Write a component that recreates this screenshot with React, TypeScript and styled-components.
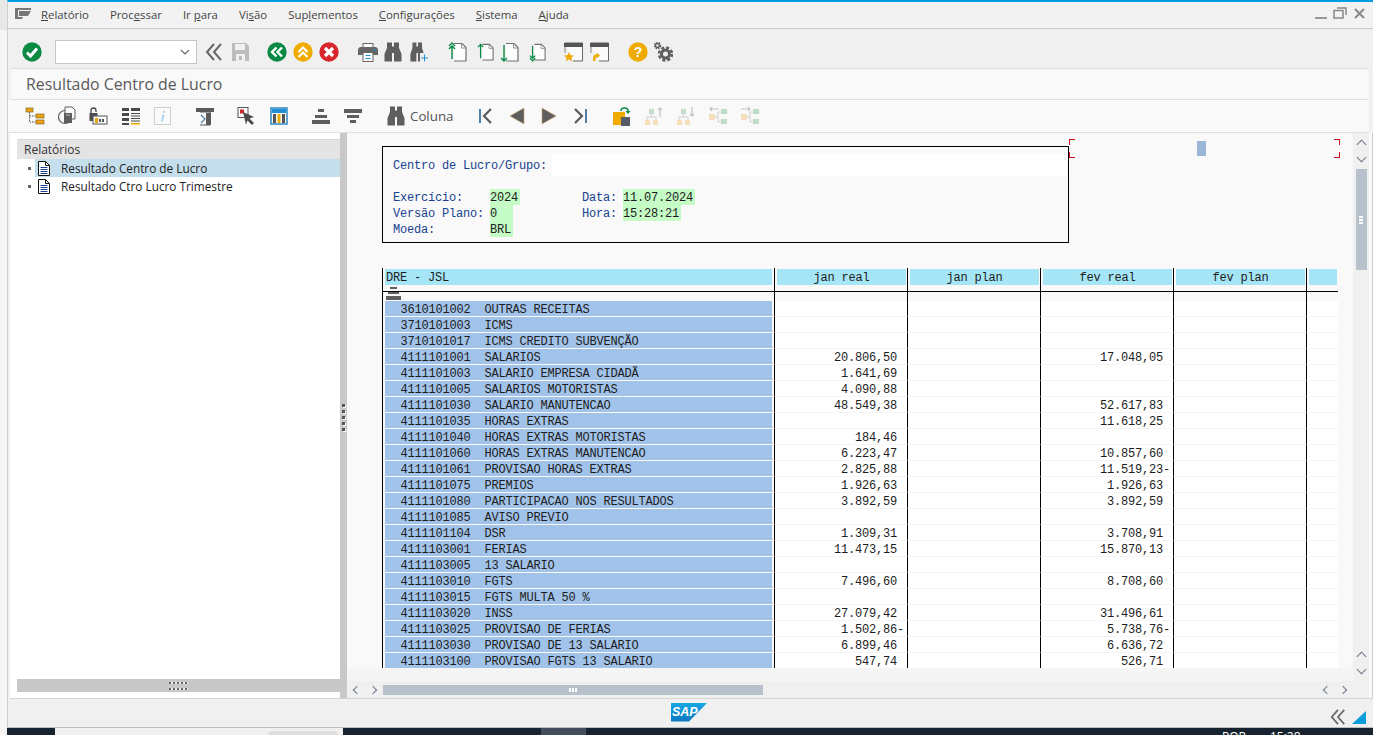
import React from "react";
import styled, { createGlobalStyle } from "styled-components";

const UI_FONT = '"Open Sans", "Noto Sans", sans-serif';
const MONO_FONT = '"Liberation Mono", "Courier New", monospace';
const MARK_RED = "linear-gradient(#d0101c, #d0101c)";

type ReportRow = { code: string; name: string; jan?: string; fev?: string };

const ROWS: ReportRow[] = [
  { code: "3610101002", name: "OUTRAS RECEITAS" },
  { code: "3710101003", name: "ICMS" },
  { code: "3710101017", name: "ICMS CREDITO SUBVENÇÃO" },
  { code: "4111101001", name: "SALARIOS", jan: "20.806,50", fev: "17.048,05" },
  { code: "4111101003", name: "SALARIO EMPRESA CIDADÃ", jan: "1.641,69" },
  { code: "4111101005", name: "SALARIOS MOTORISTAS", jan: "4.090,88" },
  { code: "4111101030", name: "SALARIO MANUTENCAO", jan: "48.549,38", fev: "52.617,83" },
  { code: "4111101035", name: "HORAS EXTRAS", fev: "11.618,25" },
  { code: "4111101040", name: "HORAS EXTRAS MOTORISTAS", jan: "184,46" },
  { code: "4111101060", name: "HORAS EXTRAS MANUTENCAO", jan: "6.223,47", fev: "10.857,60" },
  { code: "4111101061", name: "PROVISAO HORAS EXTRAS", jan: "2.825,88", fev: "11.519,23-" },
  { code: "4111101075", name: "PREMIOS", jan: "1.926,63", fev: "1.926,63" },
  { code: "4111101080", name: "PARTICIPACAO NOS RESULTADOS", jan: "3.892,59", fev: "3.892,59" },
  { code: "4111101085", name: "AVISO PREVIO" },
  { code: "4111101104", name: "DSR", jan: "1.309,31", fev: "3.708,91" },
  { code: "4111103001", name: "FERIAS", jan: "11.473,15", fev: "15.870,13" },
  { code: "4111103005", name: "13 SALARIO" },
  { code: "4111103010", name: "FGTS", jan: "7.496,60", fev: "8.708,60" },
  { code: "4111103015", name: "FGTS MULTA 50 %" },
  { code: "4111103020", name: "INSS", jan: "27.079,42", fev: "31.496,61" },
  { code: "4111103025", name: "PROVISAO DE FERIAS", jan: "1.502,86-", fev: "5.738,76-" },
  { code: "4111103030", name: "PROVISAO DE 13 SALARIO", jan: "6.899,46", fev: "6.636,72" },
  { code: "4111103100", name: "PROVISAO FGTS 13 SALARIO", jan: "547,74", fev: "526,71" },
];

const COLUMNS = ["jan real", "jan plan", "fev real", "fev plan", ""];

// amounts keep one blank place on the right for the trailing minus
const amount = (v?: string) => (v ? (v.endsWith("-") ? v : v + " ") : "");

/* ---------- icons ---------- */

const Svg = ({ w = 20, h = 20, children }: { w?: number; h?: number; children: React.ReactNode }) => (
  <svg width={w} height={h} viewBox={`0 0 ${w} ${h}`} fill="none">
    {children}
  </svg>
);

const Round = ({ color, children }: { color: string; children: React.ReactNode }) => (
  <Svg>
    <circle cx="10" cy="10" r="9.7" fill={color} />
    {children}
  </Svg>
);

const Chevrons = ({ color = "#666", size = 18 }: { color?: string; size?: number }) => (
  <svg width={size} height={size} viewBox="0 0 18 18" fill="none" stroke={color} strokeWidth="2">
    <path d="M9 1 2 9l7 8M16 1 9 9l7 8" />
  </svg>
);

const Binoculars = ({ plus }: { plus?: boolean }) => (
  <Svg w={18} h={20}>
    <path
      d="M3 0.500h5v4h2v-4h5V6l2.500 6v7.500h-7.500V11H8v8.500H0.500V12L3 6z"
      fill="#5e5e5e"
      transform={plus ? "scale(.8 1)" : undefined}
    />
    {plus && (
      <>
        <rect x="10" y="11" width="8" height="9" fill="#f0f0f0" />
        <path d="M14.500 12.500v7M11 16h7" stroke="#1f8fd6" strokeWidth="1" />
      </>
    )}
  </Svg>
);

const PageArrow = ({ dir, double }: { dir: "up" | "down"; double?: boolean }) => (
  <Svg w={19} h={20}>
    <path d="M6 1.500h8l4 4v13.500H6" fill="#fdfdfd" stroke="#707070" strokeWidth="1.200" />
    <path d="M13.500 1.500v4.500H18" stroke="#909090" />
    {dir === "up" ? (
      <path
        d={double ? "M4 17V4M1 7l3-3 3 3M1 4l3-3 3 3" : "M4 17V1.500M1 4.500l3-3 3 3"}
        stroke="#0a8a44"
        strokeWidth="1.400"
      />
    ) : (
      <path
        d={double ? "M4 3v14M1 14l3 3 3-3M1 17l3 3 3-3" : "M4 3v16M1 16l3 3 3-3"}
        stroke="#0a8a44"
        strokeWidth="1.400"
      />
    )}
  </Svg>
);

const WindowIcon = ({ kind }: { kind: "star" | "arrow" }) => (
  <Svg w={19} h={20}>
    <path d="M0.500 1h18v18H9" fill="#fafafa" stroke="#666" strokeWidth="1" />
    <rect x="0" y="1" width="19" height="4" fill="#555" />
    <path d="M1 5v6" stroke="#888" />
    {kind === "star" ? (
      <path d="M5 10l1.500 3.300 3.500.3-2.700 2.300.9 3.600L5 17.300 1.800 19.500l.9-3.600L0 13.600l3.500-.3z" fill="#f0ab00" />
    ) : (
      <path d="M3 19v-3.500c0-2 1.500-3 3.500-3V10.500l3.500 3-3.500 3V15c-.9 0-1 .5-1 1.500V19z" fill="#f0ab00" />
    )}
  </Svg>
);

const Gear = () => (
  <Svg w={19} h={20}>
    <circle cx="3.500" cy="3.500" r="2" stroke="#5e5e5e" strokeWidth="1.500" />
    <circle cx="3.500" cy="3.500" r="3.200" stroke="#5e5e5e" strokeWidth="1.200" strokeDasharray="1.500 1.200" />
    <circle cx="11.500" cy="12" r="4" stroke="#5e5e5e" strokeWidth="3" />
    <circle cx="11.500" cy="12" r="6.500" stroke="#5e5e5e" strokeWidth="2.500" strokeDasharray="3 2.100" />
  </Svg>
);

const TreeIcon = () => (
  <Svg>
    <rect x="1" y="2" width="7" height="4" fill="#e8a317" stroke="#7a5a14" strokeWidth=".6" />
    <rect x="11" y="8" width="8" height="4" fill="#e8a317" stroke="#7a5a14" strokeWidth=".6" />
    <rect x="11" y="14" width="8" height="4" fill="#e8a317" stroke="#7a5a14" strokeWidth=".6" />
    <path d="M4.500 6v10h6M4.500 10h6" stroke="#555" strokeDasharray="1.500 1" />
  </Svg>
);

const DocCircleIcon = () => (
  <Svg>
    <circle cx="8" cy="11" r="6.500" stroke="#5e5e5e" strokeWidth="1.200" fill="#fafafa" />
    <path d="M8 1h7l3 3v9H8z" fill="#fafafa" stroke="#5e5e5e" />
    <rect x="7" y="7" width="8" height="10" fill="#5e5e5e" />
    <path d="M9 9h4" stroke="#bbb" />
  </Svg>
);

const LockIcon = () => (
  <Svg>
    <path d="M3 7V4.500a2.500 2.500 0 0 1 5 0V6" stroke="#444" strokeWidth="1.300" />
    <rect x="1.500" y="7" width="8" height="8" fill="#4e4e4e" />
    <rect x="5" y="10" width="14" height="8" fill="#fafafa" stroke="#555" />
    <rect x="7" y="12" width="3" height="5" fill="#e8a317" />
    <rect x="11" y="13" width="2" height="3" fill="#555" />
    <rect x="14" y="13" width="2" height="3" fill="#555" />
  </Svg>
);

const ListIcon = () => (
  <Svg>
    <path d="M1 2h7v3H1zM1 7h7v3H1zM1 12h7v3H1zM1 17h7v2H1z" fill="#4a4a4a" />
    <path d="M10 2h9v3h-9zM10 7h9v1h-9zM10 9.500h9v1h-9zM10 12h9v1h-9zM10 14.500h9v1h-9z" fill="#4a4a4a" />
    <path d="M10 17h9v1.500h-9z" fill="#f0ab00" />
  </Svg>
);

const InfoIcon = () => (
  <Svg>
    <rect x="1.500" y="1.500" width="16" height="17" fill="#fafafa" stroke="#cfcfcf" />
    <path d="M10 5h2v1.800h-2zM9.500 8.500h2L10 15.500H8z" fill="#a9d5ee" />
  </Svg>
);

const FunnelPageIcon = () => (
  <Svg>
    <rect x="1" y="2" width="18" height="4" fill="#5a5a5a" />
    <path d="M5 6h10v13H5" fill="#fafafa" stroke="#555" />
    <rect x="11" y="7" width="5" height="12" fill="#5a5a5a" />
    <path d="M6 9l4 4-4 4" stroke="#4e7fa8" strokeWidth="1.200" />
  </Svg>
);

const CursorIcon = () => (
  <Svg>
    <rect x="2" y="1.500" width="10" height="10" fill="#fafafa" stroke="#555" />
    <rect x="4" y="3.500" width="4" height="4" fill="#c8262c" />
    <path d="M7 6l11 5-4.500 1.500L18 17l-2 2-4.500-4.500L10 18.500z" fill="#4a4a4a" />
  </Svg>
);

const GridIcon = () => (
  <Svg>
    <rect x="2" y="2" width="16" height="16" fill="#fafafa" stroke="#1f7fbd" strokeWidth="1.400" />
    <rect x="3" y="3" width="14" height="4" fill="#1f8fd6" />
    <path d="M4 8h3v9H4z" fill="#555" />
    <path d="M8.500 8h3v9h-3z" fill="#f0ab00" />
    <path d="M13 8h3v9h-3z" fill="#555" />
  </Svg>
);

const SortIcon = ({ up }: { up?: boolean }) => (
  <Svg>
    <path d={up ? "M7 3h6v3H7zM4 9h12v3H4zM1 14h18v4H1z" : "M1 3h18v4H1zM4 9h12v3H4zM7 14h6v3H7z"} fill="#5e5e5e" />
  </Svg>
);

const NavIcon = ({ kind }: { kind: "first" | "prev" | "next" | "last" }) => {
  const shapes = {
    first: (
      <>
        <path d="M5 3v14" stroke="#4f7ea8" strokeWidth="2" />
        <path d="M16 3l-7 7 7 7" stroke="#5a5a5a" strokeWidth="2.200" />
      </>
    ),
    prev: <path d="M17 2v16L3 10z" fill="#5e5e5e" stroke="#c9a26f" strokeWidth=".6" />,
    next: <path d="M3 2v16l14-8z" fill="#5e5e5e" stroke="#c9a26f" strokeWidth=".6" />,
    last: (
      <>
        <path d="M15 3v14" stroke="#4f7ea8" strokeWidth="2" />
        <path d="M4 3l7 7-7 7" stroke="#5a5a5a" strokeWidth="2.200" />
      </>
    ),
  };
  return <Svg>{shapes[kind]}</Svg>;
};

const BagIcon = () => (
  <Svg>
    <rect x="1" y="6" width="12" height="13" fill="#f0ab00" />
    <rect x="9" y="11" width="9" height="9" fill="#555c66" />
    <path d="M9 5c0-2 1.500-3 3.500-3 2.500 0 3.500 1 3.500 3" stroke="#0a8a44" strokeWidth="1.500" />
    <path d="M13.500 5l2.500 3 2.500-3z" fill="#0a8a44" />
  </Svg>
);

const HierarchyIcon = ({ kind }: { kind: "up" | "down" | "left" | "right" }) => {
  const vertical = kind === "up" || kind === "down";
  return (
    <Svg>
      {vertical ? (
        <>
          <rect x="5" y="3" width="5" height="5" fill="#c5dccb" />
          <path d="M7.500 8v3M3 14v-3h9v3" stroke="#cfcfcf" />
          <rect x="1" y="14" width="5" height="5" fill="#f3dfb8" />
          <rect x="9" y="14" width="5" height="5" fill="#f3dfb8" />
          <path
            d={kind === "up" ? "M16 11V2M14 4l2-2 2 2" : "M16 1v9M14 8l2 2 2-2"}
            stroke="#c4c4c4"
            strokeWidth="1.300"
          />
        </>
      ) : (
        <>
          <rect x="1" y="8" width="6" height="6" fill="#f3dfb8" />
          <rect x="13" y="3" width="6" height="5" fill="#bfdccb" />
          <rect x="13" y="13" width="6" height="5" fill="#bfdccb" />
          <path d="M7 11h3M10 6v10M10 6h3M10 16h3" stroke="#cfcfcf" />
          <path d={kind === "left" ? "M11 3H2M4 1L2 3l2 2" : "M1 3h9M8 1l2 2-2 2"} stroke="#c4c4c4" strokeWidth="1.200" />
        </>
      )}
    </Svg>
  );
};

const DocIcon = () => (
  <svg width="12" height="15" viewBox="0 0 12 15" fill="none">
    <path d="M0.500 0.500h7l4 4v10h-11z" fill="#fff" stroke="#111" />
    <path d="M7.500 0.500v4h4" stroke="#111" />
    <path d="M2.500 6.500h7M2.500 8.500h7M2.500 10.500h7M2.500 12.500h7" stroke="#1b3f8f" />
  </svg>
);

const SapLogo = () => (
  <svg width="36" height="19" viewBox="0 0 36 19">
    <defs>
      <linearGradient id="sapBlue" x1="0" y1="0" x2="0" y2="1">
        <stop offset="0" stopColor="#18a8e4" />
        <stop offset="1" stopColor="#0a78c2" />
      </linearGradient>
    </defs>
    <path d="M0 0h36L18 18.500H0z" fill="url(#sapBlue)" />
    <text x="1" y="13" fill="#fff" fontFamily="Liberation Sans, sans-serif" fontSize="12.500" fontWeight="700" fontStyle="italic">
      SAP
    </text>
  </svg>
);

/* ---------- page ---------- */

const App = () => {
  return (
    <Page>
      <GlobalStyle />
      <Screen>
        <Backdrop />
        <SapWindow>
          <MenuBar>
            <MenuGlyph>
              <svg width="16" height="11" viewBox="0 0 16 11">
                <path d="M0 0h16v2H3v7h5l-1 2H0z" fill="#777" />
                <path d="M4 3h12l-3 5H4z" fill="#777" />
              </svg>
            </MenuGlyph>
            <MenuList>
              <MenuItem><u>R</u>elatório</MenuItem>
              <MenuItem>Proc<u>e</u>ssar</MenuItem>
              <MenuItem>Ir <u>p</u>ara</MenuItem>
              <MenuItem>Vi<u>s</u>ão</MenuItem>
              <MenuItem>Sup<u>l</u>ementos</MenuItem>
              <MenuItem><u>C</u>onfigurações</MenuItem>
              <MenuItem><u>S</u>istema</MenuItem>
              <MenuItem><u>A</u>juda</MenuItem>
            </MenuList>
            <WindowControls>
              <svg width="12" height="12" viewBox="0 0 12 12"><rect y="10" width="12" height="2" fill="#999" /></svg>
              <svg width="14" height="12" viewBox="0 0 14 12" fill="none" stroke="#888" strokeWidth="1.500">
                <rect x="1" y="3.500" width="9" height="7.500" />
                <path d="M4 1h9v7" />
              </svg>
              <svg width="11" height="11" viewBox="0 0 11 11" stroke="#888" strokeWidth="2"><path d="M1 1l9 9M10 1l-9 9" /></svg>
            </WindowControls>
          </MenuBar>

          <MainToolbar>
            <Slot $ml={14} $w={20}>
              <Round color="#0b8a44"><path d="M5 10.500l3.500 3.500L15 6.500" stroke="#fff" strokeWidth="3" /></Round>
            </Slot>
            <CommandBox $ml={13}>
              <svg width="10" height="6" viewBox="0 0 10 6" fill="none" stroke="#666" strokeWidth="1.200"><path d="M1 1l4 4 4-4" /></svg>
            </CommandBox>
            <Slot $ml={8} $w={18}><Chevrons /></Slot>
            <Slot $ml={8} $w={19}>
              <Svg w={19} h={20}>
                <path d="M1 1h14l3 3v15H1z" fill="#bcbcbc" />
                <rect x="4" y="2" width="10" height="6" fill="#f0f0f0" />
                <rect x="5" y="12" width="9" height="7" fill="#f0f0f0" />
                <rect x="8" y="14" width="3" height="4" fill="#bcbcbc" />
              </Svg>
            </Slot>
            <Slot $ml={17} $w={20}>
              <Round color="#0b8a44"><path d="M9.500 5.500 5 10l4.500 4.500M15 5.500 10.500 10l4.500 4.500" stroke="#fff" strokeWidth="2.400" /></Round>
            </Slot>
            <Slot $ml={6} $w={20}>
              <Round color="#f0ab00"><path d="M5.500 10 10 5.500l4.500 4.500M5.500 15 10 10.500l4.500 4.500" stroke="#fff" strokeWidth="2.200" /></Round>
            </Slot>
            <Slot $ml={6} $w={20}>
              <Round color="#d9252c"><path d="M6 6l8 8M14 6l-8 8" stroke="#fff" strokeWidth="3.200" /></Round>
            </Slot>
            <Slot $ml={19} $w={20}>
              <Svg>
                <rect x="5" y="1.500" width="10" height="4" fill="#fafafa" stroke="#666" />
                <path d="M0 8c0-1.500 1-3 3-3h14c2 0 3 1.500 3 3v5H0z" fill="#666" />
                <rect x="5" y="10.500" width="10" height="9" fill="#fafafa" stroke="#666" />
                <path d="M7.500 13.500h5M7.500 16.500h5" stroke="#1f8fd6" />
                <rect x="15.500" y="7" width="2" height="1.500" fill="#1f8fd6" />
              </Svg>
            </Slot>
            <Slot $ml={6} $w={18}><Binoculars /></Slot>
            <Slot $ml={8} $w={18}><Binoculars plus /></Slot>
            <Slot $ml={20} $w={19}><PageArrow dir="up" double /></Slot>
            <Slot $ml={10} $w={17}><PageArrow dir="up" /></Slot>
            <Slot $ml={6} $w={19}><PageArrow dir="down" /></Slot>
            <Slot $ml={10} $w={17}><PageArrow dir="down" double /></Slot>
            <Slot $ml={18} $w={19}><WindowIcon kind="star" /></Slot>
            <Slot $ml={7} $w={19}><WindowIcon kind="arrow" /></Slot>
            <Slot $ml={19} $w={20}>
              <Round color="#f0ab00">
                <text x="10" y="15" textAnchor="middle" fill="#fff" fontFamily="Liberation Sans, sans-serif" fontSize="14" fontWeight="700">?</text>
              </Round>
            </Slot>
            <Slot $ml={6} $w={19}><Gear /></Slot>
          </MainToolbar>

          <TitleBar>Resultado Centro de Lucro</TitleBar>

          <AppToolbar>
            <Slot $ml={17} $w={20}><TreeIcon /></Slot>
            <Slot $ml={12} $w={20}><DocCircleIcon /></Slot>
            <Slot $ml={11} $w={20}><LockIcon /></Slot>
            <Slot $ml={13} $w={20}><ListIcon /></Slot>
            <Slot $ml={12} $w={20}><InfoIcon /></Slot>
            <Slot $ml={22} $w={20}><FunnelPageIcon /></Slot>
            <Slot $ml={21} $w={20}><CursorIcon /></Slot>
            <Slot $ml={13} $w={20}><GridIcon /></Slot>
            <Slot $ml={22} $w={20}><SortIcon up /></Slot>
            <Slot $ml={12} $w={20}><SortIcon /></Slot>
            <Slot $ml={24} $w={18}><Binoculars /></Slot>
            <ToolLabel>Coluna</ToolLabel>
            <Slot $ml={23} $w={20}><NavIcon kind="first" /></Slot>
            <Slot $ml={12} $w={20}><NavIcon kind="prev" /></Slot>
            <Slot $ml={12} $w={20}><NavIcon kind="next" /></Slot>
            <Slot $ml={12} $w={20}><NavIcon kind="last" /></Slot>
            <Slot $ml={21} $w={20}><BagIcon /></Slot>
            <Slot $ml={12} $w={20}><HierarchyIcon kind="up" /></Slot>
            <Slot $ml={12} $w={20}><HierarchyIcon kind="down" /></Slot>
            <Slot $ml={12} $w={20}><HierarchyIcon kind="left" /></Slot>
            <Slot $ml={12} $w={20}><HierarchyIcon kind="right" /></Slot>
          </AppToolbar>

          <Workspace>
            <Gutter />
            <TreePane>
              <TreeBox>
                <TreeHeader>Relatórios</TreeHeader>
                <TreeList>
                  <TreeRow>
                    <Bullet />
                    <TreeLabel $selected><DocIcon /><span>Resultado Centro de Lucro</span></TreeLabel>
                  </TreeRow>
                  <TreeRow>
                    <Bullet />
                    <TreeLabel><DocIcon /><span>Resultado Ctro Lucro Trimestre</span></TreeLabel>
                  </TreeRow>
                </TreeList>
                <HSash>
                  <HGrip />
                  <HGrip />
                </HSash>
              </TreeBox>
            </TreePane>
            <VSash>
              <VGrip /><VGrip /><VGrip /><VGrip /><VGrip />
            </VSash>
            <ReportPane>
              <ReportMain>
                <ReportView>
                  <Report>
                    <InfoBox>
                      <GroupLine>
                        <GroupLabel>Centro de Lucro/Grupo:</GroupLabel>
                        <GroupField />
                      </GroupLine>
                      <InfoGrid>
                        <BlueText>Exercício:</BlueText>
                        <Value $w={30}>2024</Value>
                        <BlueText>Data:</BlueText>
                        <Value $w={72}>11.07.2024</Value>
                        <BlueText>Versão Plano:</BlueText>
                        <Value $w={23}>0</Value>
                        <BlueText>Hora:</BlueText>
                        <Value $w={58}>15:28:21</Value>
                        <BlueText>Moeda:</BlueText>
                        <Value $w={23}>BRL</Value>
                      </InfoGrid>
                    </InfoBox>
                    <CornerMark $side="left" />
                    <PositionMark />
                    <CornerMark $side="right" />

                    <Table>
                      <HeaderRow>
                        <FirstCell><HeaderFill $first>DRE - JSL</HeaderFill></FirstCell>
                        {COLUMNS.map((c, i) => (
                          <ValueCell key={i}><HeaderFill>{c}</HeaderFill></ValueCell>
                        ))}
                      </HeaderRow>
                      <SumRow>
                        <FirstCell />
                        {COLUMNS.map((_, i) => <ValueCell key={i} />)}
                        <SumGlyph>
                          <svg width="15" height="14" viewBox="0 0 15 14">
                            <path d="M4 0h7v2H4zM2 5h11v2H2zM0 9h15v4H0z" fill="#5e5e5e" />
                          </svg>
                        </SumGlyph>
                      </SumRow>
                      {ROWS.map((r) => (
                        <DataRow key={r.code}>
                          <FirstCell><RowBar>{`${r.code}  ${r.name}`}</RowBar></FirstCell>
                          <ValueCell><Amount>{amount(r.jan)}</Amount></ValueCell>
                          <ValueCell />
                          <ValueCell><Amount>{amount(r.fev)}</Amount></ValueCell>
                          <ValueCell />
                          <ValueCell />
                        </DataRow>
                      ))}
                    </Table>
                  </Report>
                </ReportView>
                <VScroll>
                  <ScrollArrows>
                    <ArrowV $up /><ArrowV />
                  </ScrollArrows>
                  <VThumb><i /><i /><i /></VThumb>
                  <ScrollArrows $bottom>
                    <ArrowV $up /><ArrowV />
                  </ScrollArrows>
                </VScroll>
              </ReportMain>
              <HScroll>
                <ArrowH />
                <ArrowH $right />
                <HThumb><i /><i /><i /></HThumb>
                <HScrollEnd>
                  <ArrowH />
                  <ArrowH $right />
                </HScrollEnd>
              </HScroll>
            </ReportPane>
            <RightEdge />
          </Workspace>

          <StatusBar>
            <SapLogo />
            <StatusEnd>
              <Chevrons color="#6a6a6a" size={16} />
              <svg width="14" height="13" viewBox="0 0 14 13"><path d="M14 0v13H0z" fill="#0a9ddb" /></svg>
            </StatusEnd>
          </StatusBar>
        </SapWindow>
      </Screen>

      <Taskbar>
        <TaskDark $w={48} />
        <TaskSearch><TaskPill /></TaskSearch>
        <TaskDark $w={198} />
        <TaskActive />
        <TaskClock>
          <span>POR</span>
          <span>15:28</span>
        </TaskClock>
      </Taskbar>
    </Page>
  );
};

export default App;

const GlobalStyle = createGlobalStyle`
  html, body {
    margin: 0;
    padding: 0;
    height: 100%;
    overflow: hidden;
    background: #f4f4f4;
    font-family: ${UI_FONT};
  }
  #root { height: 100%; }
`;

const Page = styled.div`
  width: 1373px;
  height: 735px;
  display: flex;
  flex-direction: column;
  overflow: hidden;
`;

const Screen = styled.div`
  flex: 1;
  min-height: 0;
  display: flex;
`;

const Backdrop = styled.div`
  width: 7px;
  background: linear-gradient(#e8e8e8 0 30px, #f5f5f5 30px);
`;

const SapWindow = styled.div`
  flex: 1;
  min-width: 0;
  display: flex;
  flex-direction: column;
  border-left: 1px solid #cfcfcf;
  background: #f0f0f0;
  border-top: 2px solid #009de0;
`;

const MenuBar = styled.div`
  height: 26px;
  flex: none;
  display: flex;
  align-items: center;
  background: #f2f2f2;
  border-bottom: 1px solid #c9c9c9;
  box-sizing: content-box;
`;

const MenuGlyph = styled.span`
  margin-left: 7px;
  width: 26px;
  display: flex;
  margin-top: -4px;
`;

const MenuList = styled.div`
  display: flex;
  gap: 21px;
`;

const MenuItem = styled.span`
  font-size: 11.38px;
  color: #444;
  line-height: 16px;
`;

const WindowControls = styled.div`
  margin-left: auto;
  margin-right: 8px;
  display: flex;
  align-items: center;
  gap: 6px;
  margin-top: -4px;

  svg:nth-child(2) {
    margin-right: 1px;
  }
`;

const MainToolbar = styled.div`
  height: 39px;
  flex: none;
  display: flex;
  align-items: center;
  background: #f0f0f0;
  padding-top: 7px;
  box-sizing: border-box;
`;

const Slot = styled.span<{ $w: number; $ml: number }>`
  flex: none;
  width: ${(p) => p.$w}px;
  margin-left: ${(p) => p.$ml}px;
  height: 20px;
  display: flex;
  align-items: center;
  justify-content: center;
`;

const CommandBox = styled.div<{ $ml: number }>`
  width: 142px;
  height: 24px;
  box-sizing: border-box;
  margin-left: ${(p) => p.$ml}px;
  background: #fff;
  border: 1px solid #c4c4c4;
  display: flex;
  align-items: center;
  justify-content: flex-end;
  padding-right: 6px;
`;

const TitleBar = styled.div`
  height: 32px;
  flex: none;
  margin: 0 4px 0 3px;
  padding-left: 15px;
  box-sizing: border-box;
  display: flex;
  align-items: center;
  background: #f9f9f9;
  border-top: 1px solid #e0e0e0;
  border-bottom: 1px solid #e0e0e0;
  font-size: 15.85px;
  color: #5a5a5a;
`;

const AppToolbar = styled.div`
  height: 33px;
  flex: none;
  display: flex;
  align-items: center;
  margin-right: 4px;
  background: #f9f9f9;
  border-bottom: 1px solid #e0e0e0;
  box-sizing: border-box;
`;

const ToolLabel = styled.span`
  margin-left: 5px;
  width: 42px;
  font-size: 13.3px;
  color: #555;
  white-space: nowrap;
`;

const Workspace = styled.div`
  height: 565px;
  flex: none;
  display: flex;
`;

const Gutter = styled.div`
  width: 2px;
  background: #f0f0f0;
`;

const TreePane = styled.div`
  width: 330px;
  flex: none;
  background: #fff;
  padding: 6px 0 6px 7px;
  box-sizing: border-box;
  display: flex;
`;

const TreeBox = styled.div`
  flex: 1;
  display: flex;
  flex-direction: column;
  border-top: 1px solid #d8d8d8;
`;

const TreeHeader = styled.div`
  height: 19px;
  flex: none;
  background: #e4e4e4;
  padding-left: 7px;
  font-size: 12px;
  line-height: 19px;
  color: #333;
`;

const TreeList = styled.div`
  flex: 1;
  background: #fff;
`;

const TreeRow = styled.div`
  height: 18px;
  display: flex;
  align-items: center;
  padding-left: 11px;
`;

const Bullet = styled.span`
  width: 3px;
  height: 3px;
  background: #666;
  flex: none;
`;

const TreeLabel = styled.div<{ $selected?: boolean }>`
  flex: 1;
  height: 100%;
  margin-left: 4px;
  padding-left: 3px;
  display: flex;
  align-items: center;
  gap: 11px;
  font-size: 11.8px;
  color: #222;
  background: ${(p) => (p.$selected ? "#c5deec" : "transparent")};
`;

const HSash = styled.div`
  height: 13px;
  flex: none;
  background: #c8c8c8;
  display: flex;
  flex-direction: column;
  align-items: center;
  justify-content: center;
  gap: 4px;
`;

const HGrip = styled.i`
  width: 19px;
  height: 2px;
  background: repeating-linear-gradient(90deg, #666 0 2px, #eee 2px 4px);
`;

const VSash = styled.div`
  width: 7px;
  flex: none;
  background: #c8c8c8;
  display: flex;
  flex-direction: column;
  align-items: center;
  justify-content: center;
  gap: 3px;
  padding-top: 4px;
  box-sizing: border-box;
`;

const VGrip = styled.i`
  width: 3px;
  height: 3px;
  background: #555;
  box-shadow: 1px 1px 0 #fff;
`;

const ReportPane = styled.div`
  flex: 1;
  min-width: 0;
  display: flex;
  flex-direction: column;
`;

const ReportMain = styled.div`
  flex: 1;
  min-height: 0;
  display: flex;
`;

const ReportView = styled.div`
  flex: 1;
  min-width: 0;
  background: #f5f5f5;
  padding-bottom: 13px;
`;

const Report = styled.div`
  position: relative;
  height: 100%;
  overflow: hidden;
  background: #f9f9f9;
  padding: 13px 0 0 35px;
  box-sizing: border-box;
  font-family: ${MONO_FONT};
  font-size: 12px;
  letter-spacing: -0.2px;
  line-height: 16px;
  color: #1d1d1d;
`;

const InfoBox = styled.div`
  width: 687px;
  height: 97px;
  box-sizing: border-box;
  border: 1px solid #000;
  padding: 7px 0 0 10px;
`;

const GroupLine = styled.div`
  display: flex;
  height: 22px;
  align-items: flex-start;
`;

const GroupField = styled.div`
  flex: 1;
  height: 22px;
  margin-left: 5px;
  background: #fff;
  margin-right: 1px;
`;

const BlueText = styled.span`
  color: #17418f;
  white-space: pre;
  line-height: 18px;
`;

const GroupLabel = styled(BlueText)`
  line-height: 24px;
`;

const InfoGrid = styled.div`
  margin-top: 13px;
  display: grid;
  grid-template-columns: 97px 92px 41px auto;
  grid-auto-rows: 16px;
`;

const Value = styled.span<{ $w: number }>`
  width: ${(p) => p.$w}px;
  background: #c5fbc5;
  white-space: pre;
  color: #1d1d1d;
  line-height: 18px;
`;

const CornerMark = styled.span<{ $side: "left" | "right" }>`
  position: absolute;
  top: 6px;
  left: ${(p) => (p.$side === "left" ? 722 : 987)}px;
  width: 6px;
  height: 19px;
  background:
    ${MARK_RED} left top / 6px 1px no-repeat,
    ${MARK_RED} left bottom / 6px 1px no-repeat,
    ${MARK_RED} ${(p) => p.$side} top / 1px 6px no-repeat,
    ${MARK_RED} ${(p) => p.$side} bottom / 1px 6px no-repeat;
`;

const PositionMark = styled.span`
  position: absolute;
  top: 8px;
  left: 850px;
  width: 9px;
  height: 15px;
  background: #9ab6d6;
`;

const Table = styled.div`
  margin-top: 25px;
  width: 956px;
`;

const Columns = styled.div`
  display: grid;
  grid-template-columns: 392px 133px 133px 133px 133px 32px;
`;

const HeaderRow = styled(Columns)`
  height: 23px;
  border-bottom: 1px solid #000;
`;

const SumRow = styled(Columns)`
  height: 9px;
  position: relative;
`;

const SumGlyph = styled.span`
  position: absolute;
  left: 4px;
  top: -5px;
  display: flex;
`;

const DataRow = styled(Columns)`
  height: 16px;
`;

const FirstCell = styled.div`
  border-left: 1px solid #000;
  padding-left: 2px;
  overflow: hidden;
`;

const ValueCell = styled.div`
  border-left: 1px solid #000;
  position: relative;
  overflow: hidden;

  ${DataRow} & {
    background: #fff;
    border-bottom: 1px solid #f5f5f5;
  }
`;

const HeaderFill = styled.div<{ $first?: boolean }>`
  height: 16px;
  line-height: 18px;
  margin: 1px ${(p) => (p.$first ? "2px" : "1px")} 0 ${(p) => (p.$first ? "0" : "2px")};
  background: #a5e5f5;
  text-align: ${(p) => (p.$first ? "left" : "center")};
  padding-left: ${(p) => (p.$first ? "1px" : "0")};
  white-space: pre;
`;

const RowBar = styled.div`
  height: 15px;
  line-height: 18px;
  margin-right: 2px;
  background: #a2c3e9;
  padding-left: 15.5px;
  white-space: pre;
`;

const Amount = styled.div`
  padding-right: 3px;
  text-align: right;
  white-space: pre;
  line-height: 18px;
`;

const VScroll = styled.div`
  width: 16px;
  flex: none;
  background: #f0f0f0;
  display: flex;
  flex-direction: column;
  align-items: center;
`;

const ScrollArrows = styled.div<{ $bottom?: boolean }>`
  display: flex;
  flex-direction: column;
  align-items: center;
  gap: 10px;
  margin-top: ${(p) => (p.$bottom ? "auto" : "6px")};
  margin-bottom: 6px;
`;

const ArrowV = styled.span<{ $up?: boolean }>`
  width: 7px;
  height: 7px;
  box-sizing: border-box;
  border-left: 1.5px solid #6d7a8c;
  border-top: 1.5px solid #6d7a8c;
  transform: ${(p) => (p.$up ? "translateY(2px) rotate(45deg)" : "translateY(-2px) rotate(225deg)")};
`;

const VThumb = styled.div`
  width: 11px;
  height: 101px;
  flex: none;
  background: #b6c1cc;
  display: flex;
  flex-direction: column;
  align-items: center;
  justify-content: center;
  gap: 1px;

  i {
    width: 4px;
    height: 2px;
    background: #fff;
  }
`;

const HScroll = styled.div`
  height: 17px;
  flex: none;
  background: #f0f0f0;
  display: flex;
  align-items: center;
`;

const ArrowH = styled.span<{ $right?: boolean }>`
  width: 6px;
  height: 6px;
  flex: none;
  box-sizing: border-box;
  margin-left: ${(p) => (p.$right ? "10px" : "7px")};
  border-left: 1.5px solid #6d7a8c;
  border-top: 1.5px solid #6d7a8c;
  transform: rotate(${(p) => (p.$right ? "135deg" : "-45deg")});
`;

const HThumb = styled.div`
  margin-left: 7px;
  width: 380px;
  height: 10px;
  background: #b6c1cc;
  display: flex;
  align-items: center;
  justify-content: center;
  gap: 1px;

  i {
    width: 2px;
    height: 4px;
    background: #fff;
  }
`;

const HScrollEnd = styled.div`
  margin-left: auto;
  margin-right: 23px;
  display: flex;
`;

const RightEdge = styled.div`
  width: 4px;
  flex: none;
  background: #fafafa;
  border-right: 1px solid #ccc;
  box-sizing: border-box;
`;

const StatusBar = styled.div`
  flex: 1;
  position: relative;
  display: flex;
  justify-content: center;
  padding-top: 4px;
  padding-right: 6px;
  margin-left: 2px;
  box-sizing: border-box;
  background: #f0f0f0;
  border-top: 1px solid #d4d4d4;
`;

const StatusEnd = styled.div`
  position: absolute;
  right: 7px;
  top: 10px;
  display: flex;
  align-items: center;
  gap: 6px;
`;

const Taskbar = styled.div`
  height: 8px;
  flex: none;
  margin-left: 7px;
  display: flex;
  overflow: hidden;
  background: #17232f;
  border-top: 1px solid #bdbdbd;
  box-sizing: border-box;
`;

const TaskDark = styled.div<{ $w: number }>`
  width: ${(p) => p.$w}px;
  flex: none;
`;

const TaskSearch = styled.div`
  width: 288px;
  flex: none;
  background: #f0f0f0;
  display: flex;
  justify-content: flex-end;
  padding: 3px 5px 0 0;
  box-sizing: border-box;
`;

const TaskPill = styled.div`
  width: 70px;
  height: 20px;
  border-radius: 4px;
  background: #dedede;
`;

const TaskActive = styled.div`
  width: 45px;
  flex: none;
  background: #444e5a;
`;

const TaskClock = styled.div`
  margin-left: 636px;
  margin-top: 2px;
  display: flex;
  gap: 24px;
  color: #fff;
  font-size: 12px;
  line-height: 14px;
`;
